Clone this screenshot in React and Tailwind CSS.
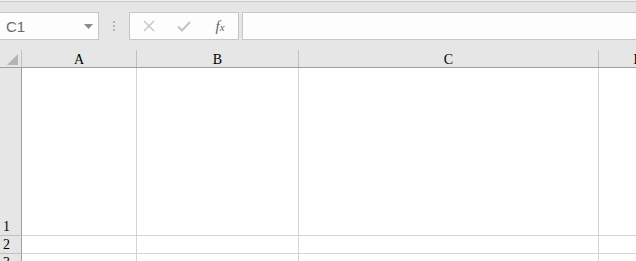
import React from "react";

const cols = [
  { l: "A", w: 115 },
  { l: "B", w: 162 },
  { l: "C", w: 300 },
  { l: "D", w: 80 },
];

export default function App() {
  const serif = { fontFamily: '"Liberation Serif", "DejaVu Serif", serif' };
  return (
    <div className="w-[636px] h-[261px] overflow-hidden bg-[#e6e6e6] relative">
      {/* top line */}
      <div className="h-[1px] bg-[#f0f0f0]" />
      <div className="h-[1px] bg-[#c9c9c9]" />
      {/* toolbar */}
      <div className="flex items-start pt-[10px] h-[46px]">
        <div className="w-[100px] h-[28px] -ml-[1px] border border-[#c6c6c6] bg-[#fdfdfd] flex items-center justify-between pl-[6px] pr-[5px]">
          <span className="text-[15px] text-[#6a6a6a] leading-none" style={{ fontFamily: '"Liberation Sans", Arial, sans-serif' }}>C1</span>
          <svg width="9" height="5" viewBox="0 0 9 5"><path d="M0 0h9L4.5 5z" fill="#8a8a8a" /></svg>
        </div>
        <div className="w-[30px] h-[28px] flex flex-col items-center justify-center gap-[2px]">
          <div className="w-[2px] h-[2px] bg-[#b5b5b5]" />
          <div className="w-[2px] h-[2px] bg-[#b5b5b5]" />
          <div className="w-[2px] h-[2px] bg-[#b5b5b5]" />
        </div>
        <div className="w-[110px] h-[28px] border border-[#c6c6c6] bg-[#fdfdfd] flex items-center">
          <div className="w-[36px] flex justify-center pl-[1px]">
            <svg width="12" height="12" viewBox="0 0 12 12"><path d="M1 1L11 11M11 1L1 11" stroke="#c4c4c4" strokeWidth="1.4" /></svg>
          </div>
          <div className="w-[36px] flex justify-center">
            <svg width="14" height="11" viewBox="0 0 14 11"><path d="M1 5.5L5 9.5L13 1" stroke="#c4c4c4" strokeWidth="2" fill="none" /></svg>
          </div>
          <div className="w-[36px] flex justify-center">
            <span className="text-[15px] italic text-[#666] leading-none" style={serif}>
              f<span className="text-[11px]">x</span>
            </span>
          </div>
        </div>
        <div className="ml-[3px] flex-1 h-[28px] border border-r-0 border-[#c6c6c6] bg-[#fdfdfd]" />
      </div>
      {/* column header */}
      <div className="flex h-[20px] border-b border-[#9f9f9f]">
        <div className="w-[22px] shrink-0 relative border-r border-[#c0c0c0] mt-[2px]">
          <svg className="absolute left-[7px] top-[4px]" width="11" height="11" viewBox="0 0 11 11"><path d="M11 0V11H0z" fill="#b4b4b4" /></svg>
        </div>
        {cols.map((c) => (
          <div key={c.l} className="shrink-0 flex items-end justify-center border-r border-[#c0c0c0] mt-[2px]" style={{ width: c.w }}>
            <span className="text-[14px] leading-none text-black" style={serif}>{c.l}</span>
          </div>
        ))}
      </div>
      {/* rows */}
      {[{ n: "1", h: 168 }, { n: "2", h: 18 }, { n: "3", h: 18 }].map((r) => (
        <div key={r.n} className="flex bg-white" style={{ height: r.h }}>
          <div className="w-[22px] shrink-0 bg-[#e6e6e6] border-r border-b border-r-[#9f9f9f] border-b-[#c0c0c0] flex items-end pl-[3px] pb-[1px]">
            <span className="text-[14px] leading-none text-black" style={serif}>{r.n}</span>
          </div>
          {cols.map((c) => (
            <div key={c.l} className="shrink-0 border-b border-r border-[#d4d4d4]" style={{ width: c.w }} />
          ))}
        </div>
      ))}
    </div>
  );
}
